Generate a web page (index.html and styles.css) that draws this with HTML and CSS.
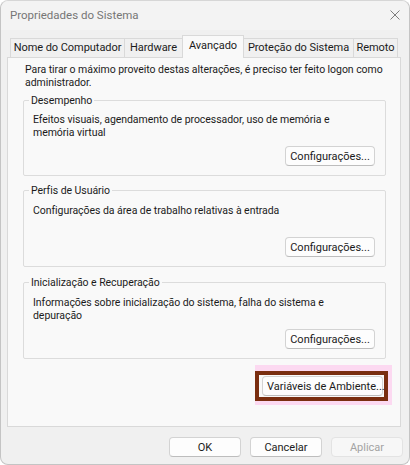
FILE: index.html
```html
<!DOCTYPE html>
<html lang="pt-BR">
<head>
  <meta charset="UTF-8" />
  <title>Propriedades do Sistema</title>
  <link rel="stylesheet" href="styles.css">
</head>
<body>
  <div class="window">
    <div class="titlebar">
      <span class="title">Propriedades do Sistema</span>
      <svg class="close" width="10" height="10" viewBox="0 0 10 10">
        <path d="M0.5 0.5 L9.5 9.5 M9.5 0.5 L0.5 9.5" stroke="#7d7d7d" stroke-width="1" fill="none"/>
      </svg>
    </div>

    <div class="tabs">
      <div class="tab t1">Nome do Computador</div>
      <div class="tab t2">Hardware</div>
      <div class="tab t3 active">Avançado</div>
      <div class="tab t4">Proteção do Sistema</div>
      <div class="tab t5">Remoto</div>
    </div>

    <div class="panel">
      <p class="intro">Para tirar o máximo proveito destas alterações, é preciso ter feito logon como administrador.</p>

      <div class="group g1">
        <span class="legend">Desempenho</span>
        <p>Efeitos visuais, agendamento de processador, uso de memória e memória virtual</p>
        <div class="row"><button class="btn">Configurações...</button></div>
      </div>

      <div class="group">
        <span class="legend">Perfis de Usuário</span>
        <p>Configurações da área de trabalho relativas à entrada</p>
        <div class="row"><button class="btn">Configurações...</button></div>
      </div>

      <div class="group">
        <span class="legend">Inicialização e Recuperação</span>
        <p>Informações sobre inicialização do sistema, falha do sistema e depuração</p>
        <div class="row"><button class="btn">Configurações...</button></div>
      </div>

      <div class="row env-row">
        <span class="halo"><span class="mark"><button class="btn env">Variáveis de Ambiente...</button></span></span>
      </div>
    </div>

    <div class="footer">
      <button class="btn wide">OK</button>
      <button class="btn wide">Cancelar</button>
      <button class="btn wide disabled">Aplicar</button>
    </div>
  </div>
</body>
</html>
```

FILE: styles.css
```css
* {
  box-sizing: border-box;
}

html, body {
  margin: 0;
  width: 410px;
  height: 465px;
  overflow: hidden;
  background-color: #ffffff;
}

body {
  font-family: Roboto, 'Liberation Sans', Arial, sans-serif;
  font-size: 10.5px;
  letter-spacing: -0.05px;
  color: #1b1b1b;
}

.window {
  width: 410px;
  height: 465px;
  background-color: #f0f0f0;
  border: 1px solid #c4c4c4;
  border-top-color: #d6d6d6;
  border-radius: 8px;
  display: flex;
  flex-direction: column;
}

.titlebar {
  height: 29px;
  display: flex;
  justify-content: space-between;
  align-items: center;
  padding: 0 9px 0 9px;
  background-color: #f3f3f3;
  border-radius: 8px 8px 0 0;
}

.title {
  color: #767676;
  font-size: 11.5px;
  letter-spacing: 0;
  margin-top: -1px;
}

.close {
  margin-top: -2px;
}

.tabs {
  display: flex;
  align-items: flex-end;
  height: 27px;
  padding-left: 9px;
  position: relative;
  z-index: 1;
}

.tab {
  height: 19px;
  line-height: 18px;
  font-size: 11px;
  text-align: center;
  border: 1px solid #d9d9d9;
  border-bottom: none;
  margin-right: -1px;
  background-color: #f0f0f0;
  white-space: nowrap;
}

.t1 { width: 115px; }
.t2 { width: 59px; }
.t3 { width: 62px; }
.t4 { width: 111px; }
.t5 { width: 45px; }

.tab.active {
  height: 23px;
  line-height: 19px;
  background-color: #f9f9f9;
  margin-bottom: -1px;
}

.panel {
  margin: 0 8px 0 6px;
  height: 370px;
  background-color: #f9f9f9;
  border: 1px solid #d9d9d9;
  padding: 5px 14px 0 15px;
}

.intro {
  margin: 0 0 11px 2px;
  line-height: 13px;
}

.group {
  position: relative;
  border: 1px solid #dcdcdc;
  border-radius: 2px;
  padding: 13px 10px 9px 9px;
  margin-bottom: 15px;
}

.g1 {
  padding-top: 12px;
  margin-bottom: 14px;
}

.group p {
  margin: 0;
  padding-right: 14px;
  height: 26px;
  line-height: 13px;
}

.legend {
  position: absolute;
  top: -7px;
  left: 5px;
  padding: 0 2px;
  background-color: #f9f9f9;
  line-height: 13px;
}

.row {
  display: flex;
  justify-content: flex-end;
  margin-top: 7px;
}

.btn {
  font-family: Roboto, 'Liberation Sans', Arial, sans-serif;
  font-size: 11px;
  color: #1b1b1b;
  background-color: #fdfdfd;
  border: 1px solid #d3d3d3;
  border-bottom-color: #bdbdbd;
  border-radius: 4px;
  height: 20px;
  padding: 0 4px;
  white-space: nowrap;
}

.group .btn {
  width: 90px;
}

.env-row {
  margin-top: -9px;
  margin-right: -6px;
}

.halo {
  display: inline-block;
  background-color: #fcd9f1;
  padding: 6px 4px 4px 0;
}

.mark {
  display: inline-block;
  border: 4px solid #7a2e10;
  padding: 1px 1px 1px 3px;
  background-color: #f9f9f9;
}

.env {
  width: 121px;
  display: block;
}

.footer {
  display: flex;
  justify-content: flex-end;
  gap: 9px;
  padding: 10px 6px 0 0;
}

.wide {
  width: 72px;
}

.disabled {
  color: #a3a3a3;
  background-color: #f7f7f7;
  border-color: #e3e3e3;
}
```
